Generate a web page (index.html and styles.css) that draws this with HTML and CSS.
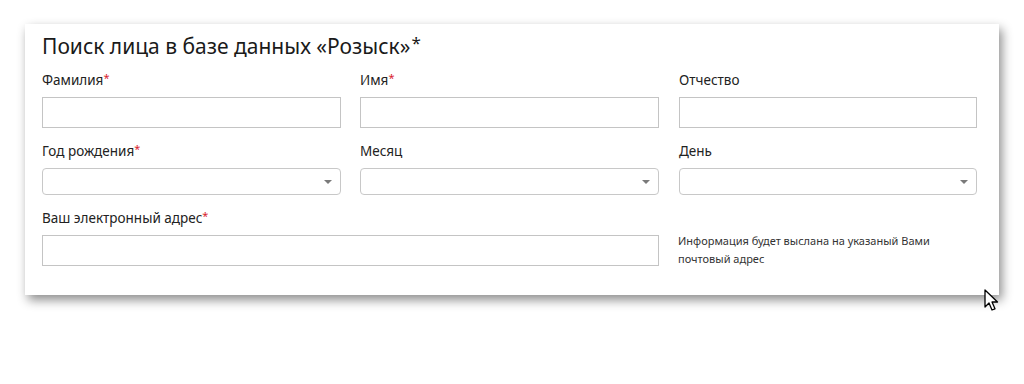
FILE: index.html
```html
<!DOCTYPE html>
<html lang="ru">
<head>
  <meta charset="UTF-8">
  <title>Поиск лица</title>
  <link rel="stylesheet" href="styles.css">
</head>
<body>

  <div class="card">
    <h2>Поиск лица в базе данных «Розыск»<span class="title-star">*</span></h2>

    <div class="form-grid">
      <div class="field">
        <label>Фамилия<span class="req">*</span></label>
        <input type="text" class="text-input">
      </div>
      <div class="field">
        <label>Имя<span class="req">*</span></label>
        <input type="text" class="text-input">
      </div>
      <div class="field">
        <label>Отчество</label>
        <input type="text" class="text-input">
      </div>

      <div class="field">
        <label>Год рождения<span class="req">*</span></label>
        <div class="select"><span class="arrow"></span></div>
      </div>
      <div class="field">
        <label>Месяц</label>
        <div class="select"><span class="arrow"></span></div>
      </div>
      <div class="field">
        <label>День</label>
        <div class="select"><span class="arrow"></span></div>
      </div>

      <div class="field wide">
        <label>Ваш электронный адрес<span class="req">*</span></label>
        <input type="text" class="text-input">
      </div>
      <div class="hint">Информация будет выслана на указаный Вами почтовый адрес</div>
    </div>

    <svg class="cursor" width="16" height="24" viewBox="0 0 16 24">
      <path d="M1 1 L1 18 L5 14 L8 21 L11 19.8 L8 13 L13.5 13 Z" fill="#fff" stroke="#000" stroke-width="1.3" stroke-linejoin="round"/>
    </svg>
  </div>

</body>
</html>
```

FILE: styles.css
```css
html, body {
  min-height: 384px;
}

body {
  margin: 0;
  background-color: #ffffff;
  font-family: "Noto Sans", "Open Sans", sans-serif;
  color: #222;
}

.card {
  position: relative;
  margin: 24px 0 0 25px;
  width: 974px;
  height: 271px;
  box-sizing: border-box;
  padding: 7px 22px 0 17px;
  background-color: #fff;
  box-shadow: 3px 5px 10px rgba(0, 0, 0, 0.45);
}

h2 {
  margin: 0 0 10px 0;
  font-size: 21px;
  line-height: 30px;
  font-weight: normal;
  color: #1a1a1a;
}

.title-star {
  font-size: 17px;
  vertical-align: top;
  line-height: 24px;
  margin-left: 1px;
}

.form-grid {
  display: grid;
  grid-template-columns: 299px 299px 298px;
  column-gap: 19px;
  row-gap: 14px;
}

.form-grid > :nth-child(3n) {
  margin-left: 1px;
  margin-right: -1px;
}

.field {
  display: flex;
  flex-direction: column;
}

.field.wide {
  grid-column: span 2;
}

label {
  font-size: 13.5px;
  line-height: 18px;
  margin-bottom: 8px;
  color: #222;
}

.req {
  color: #d9232d;
  font-size: 11px;
  vertical-align: top;
  line-height: 14px;
}

.text-input {
  height: 31px;
  box-sizing: border-box;
  border: 1px solid #c4c4c4;
  border-radius: 0;
  margin: 0;
  padding: 0 8px;
  background: #fff;
}

.select {
  position: relative;
  height: 27px;
  box-sizing: border-box;
  border: 1px solid #c8c8c8;
  border-radius: 4px;
  background: #fff;
}

.arrow {
  position: absolute;
  right: 8px;
  top: 11px;
  width: 0;
  height: 0;
  border-left: 4px solid transparent;
  border-right: 4px solid transparent;
  border-top: 4px solid #7a7a7a;
}

.hint {
  padding-top: 23px;
  font-size: 11px;
  line-height: 18px;
  color: #333;
}

.cursor {
  position: absolute;
  left: 959px;
  top: 265px;
}
```
